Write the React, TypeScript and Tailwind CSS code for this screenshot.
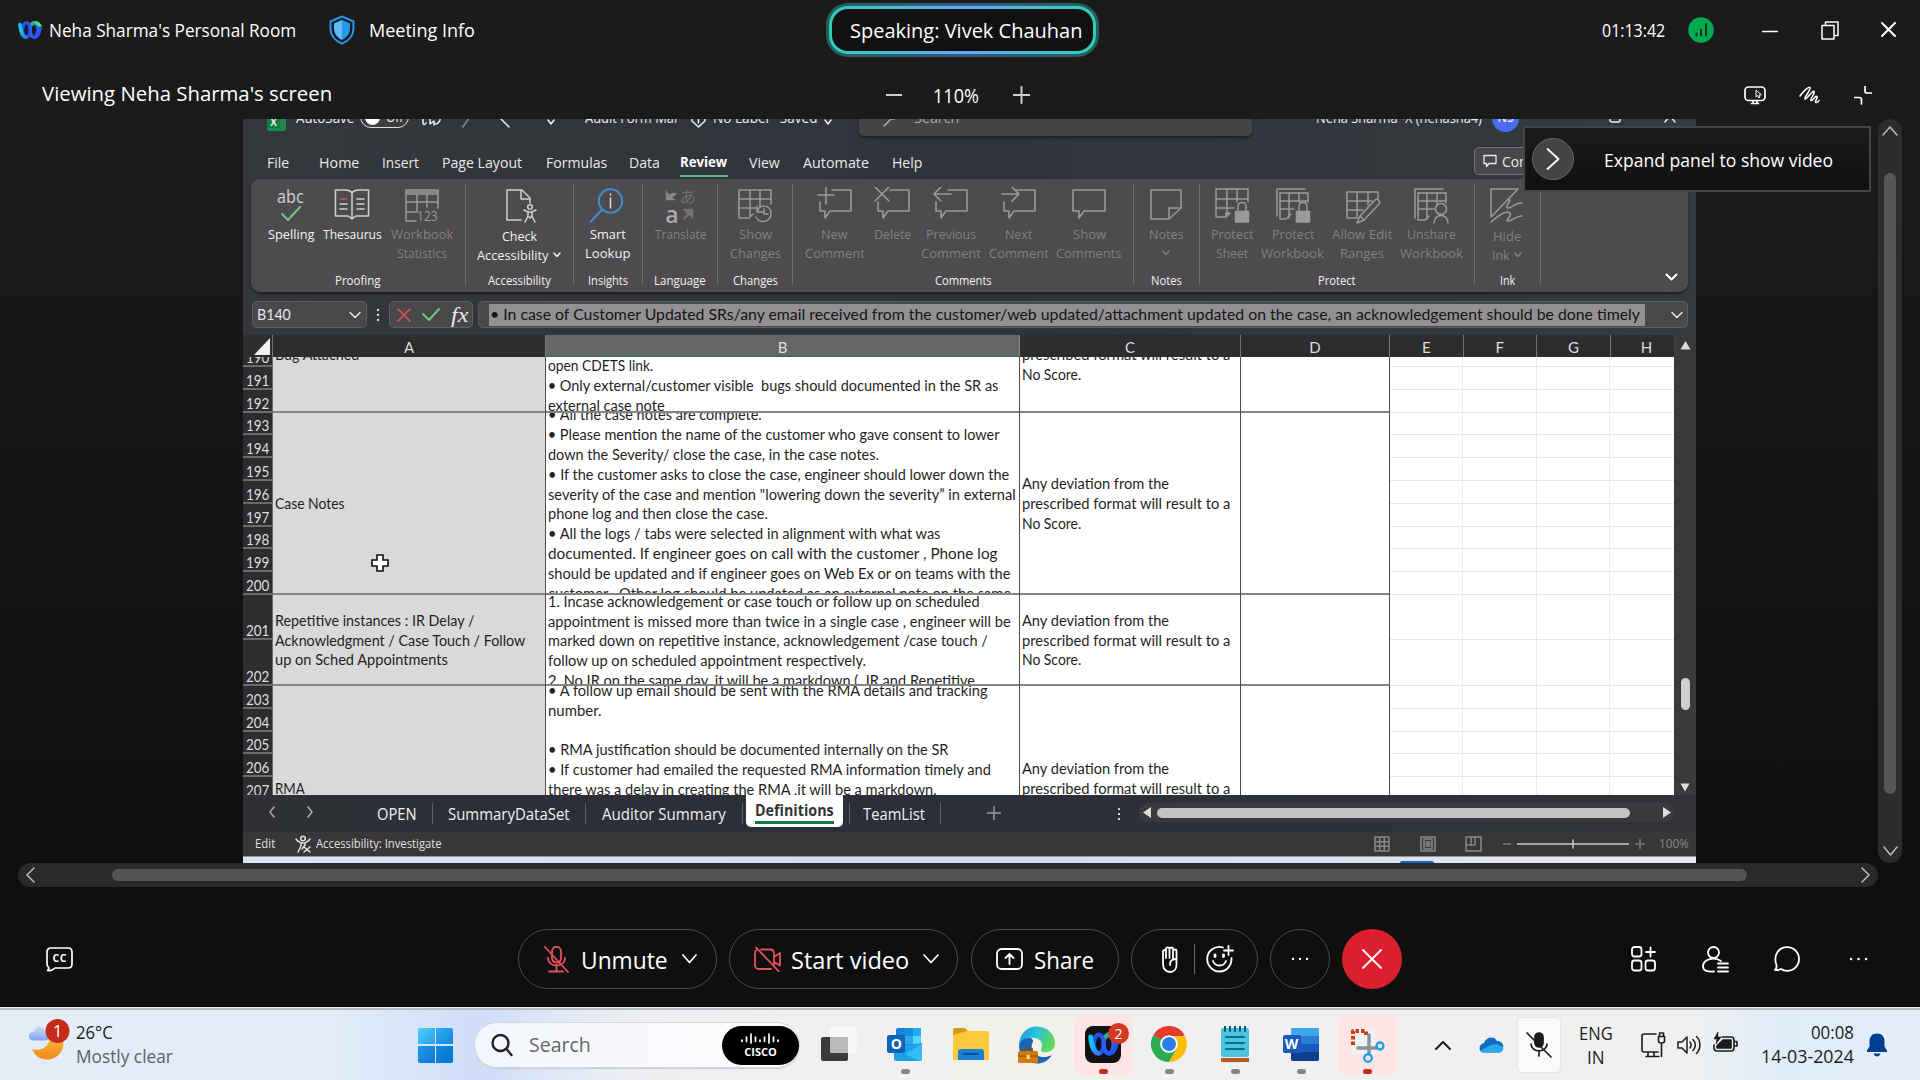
import React, { useLayoutEffect, useRef, useState } from 'react';

type TProps = { w: number; className?: string; children: React.ReactNode };

function T({ w, className = '', children }: TProps) {
  const ref = useRef<HTMLSpanElement>(null);
  const [k, setK] = useState(1);
  useLayoutEffect(() => {
    if (ref.current && ref.current.offsetWidth) setK(w / ref.current.offsetWidth);
  }, [w]);
  return (
    <span className={`block shrink-0 whitespace-pre leading-none ${className}`} style={{ width: w }}>
      <span ref={ref} className="inline-block origin-left" style={{ transform: `scaleX(${k})` }}>
        {children}
      </span>
    </span>
  );
}

type IcoProps = { w: number; h: number; className?: string; sw?: number; children: React.ReactNode };

function Ico({ w, h, className = '', sw = 1.5, children }: IcoProps) {
  return (
    <svg
      width={w}
      height={h}
      viewBox={`0 0 ${w} ${h}`}
      fill="none"
      stroke="currentColor"
      strokeWidth={sw}
      strokeLinecap="round"
      strokeLinejoin="round"
      className={`block shrink-0 ${className}`}
    >
      {children}
    </svg>
  );
}

function WebexMark({ w, h, className = '' }: { w: number; h: number; className?: string }) {
  return (
    <svg width={w} height={h} viewBox="0 0 24 18" fill="none" className={`block shrink-0 ${className}`}>
      <defs>
        <linearGradient id="wxa" x1="0" y1="0" x2="0" y2="1">
          <stop offset="0" stopColor="#07c5f5" />
          <stop offset="0.6" stopColor="#12c4ea" />
          <stop offset="1" stopColor="#2f7bff" />
        </linearGradient>
        <linearGradient id="wxb" x1="0" y1="0" x2="1" y2="0">
          <stop offset="0" stopColor="#1fae8c" />
          <stop offset="1" stopColor="#5ee86a" />
        </linearGradient>
      </defs>
      <ellipse cx="8.400" cy="9" rx="3.900" ry="7.200" stroke="#2451e8" strokeWidth="3.400" />
      <ellipse cx="16" cy="9" rx="3.900" ry="7.200" stroke="#2a5cff" strokeWidth="3.400" />
      <path d="M2 3.500C2.600 9.500 4.500 16 8 16.200" stroke="url(#wxa)" strokeWidth="3.600" strokeLinecap="round" />
      <path d="M14 3C16 0.800 20 1 21.800 5" stroke="url(#wxb)" strokeWidth="3.600" strokeLinecap="round" />
      <path d="M22 7C21.500 11 20 16 16.500 16.200" stroke="#2457f0" strokeWidth="3.600" strokeLinecap="round" />
    </svg>
  );
}

function TitleBar() {
  return (
    <div className="flex h-[60px] items-center pl-[18px] text-[17.5px] text-white">
      <WebexMark w={24} h={18} />
      <T w={247.5} className="ml-[6.5px] pt-[2px]">Neha Sharma's Personal Room</T>
      <Ico w={26} h={30} className="ml-[33px]" sw={2}>
        <path d="M13 1.500L24.500 6.500V13C24.500 20 20 26 13 28.700C6 26 1.500 20 1.500 13V6.500Z" stroke="#2196e8" fill="#151d24" />
        <path d="M13 5L5 8.500V13C5 18.500 8 22.500 13 25Z" fill="#5fbdf6" stroke="none" />
        <path d="M13 5L21 8.500V13C21 18.500 18 22.500 13 25Z" fill="#2698e8" stroke="none" />
      </Ico>
      <T w={106} className="ml-[14px] pt-[2px]">Meeting Info</T>
      <div className="ml-[351px] h-[54px] w-[273px] rounded-[22px] bg-linear-to-r from-[#245f58] via-[#34597f] to-[#245f58] p-[3px]">
        <div className="h-full rounded-[19px] bg-linear-to-r from-[#2fcdb4] via-[#62aaff] to-[#2fcdb4] p-[3px]">
          <div className="flex h-full items-center rounded-[16px] bg-[#111] pl-[18px] text-[20px]">
            <T w={232} className="pt-px">Speaking: Vivek Chauhan</T>
          </div>
        </div>
      </div>
      <T w={63} className="ml-[502.5px] pt-[2px]">01:13:42</T>
      <Ico w={26} h={26} className="ml-[23.5px]" sw={2}>
        <circle cx="13" cy="13" r="12.800" fill="#00ab50" stroke="none" />
        <path d="M8.500 16.500V18.500M13 12.500V18.500M18 7V18.500" stroke="#06371d" />
      </Ico>
      <Ico w={16} h={20} className="ml-[48px]">
        <path d="M0.500 11.500H15.500" />
      </Ico>
      <Ico w={18} h={19} className="ml-[43px]">
        <path d="M1 4.500H13V18H1Z M4.500 4V1H17V14.500H13.500" />
      </Ico>
      <Ico w={15} h={16} className="ml-[42px]" sw={2}>
        <path d="M1 1L14 14M14 1L1 14" />
      </Ico>
    </div>
  );
}

function ViewBar() {
  return (
    <div className="flex h-[59px] items-center pl-[42px] pt-[11px] text-[20px] text-white">
      <T w={290} className="mb-[2px]">Viewing Neha Sharma's screen</T>
      <Ico w={16} h={16} className="ml-[554px] text-[#ccc]" sw={2}>
        <path d="M0 8H16" />
      </Ico>
      <T w={46} className="ml-[31px] pt-[2px]">110%</T>
      <Ico w={17} h={18} className="ml-[34px] text-[#ccc]" sw={2}>
        <path d="M0 9H17M8.500 1V17" />
      </Ico>
      <Ico w={22} h={20} className="ml-[714px]" sw={1.7}>
        <rect x="1" y="2" width="20" height="13.500" rx="3.500" />
        <path d="M7.500 18.500H14.500M9 16V18M13 16V18" />
        <path d="M12 5.500V12L13.500 10.500L15 13L16 12L15 10L17 9.800Z" strokeWidth="1" />
      </Ico>
      <Ico w={21} h={18} className="ml-[33px]" sw={1.6}>
        <path d="M1 10C4 6 9.500 0 11 1.500C12.500 3 4.500 12 6 13C7.500 14 13.500 4 15 5.500C16.500 7 10.500 13.500 12 14.500C13.500 15.300 16.500 9 18 10.500C19 12 15 16 17 16.500C18.500 16.800 19.500 15.500 20 14.500" />
      </Ico>
      <Ico w={18} h={19} className="ml-[34px]" sw={1.7}>
        <path d="M11 0.500V5C11 6.500 11.800 7 13 7H17.500M0.500 11.500H5C6.500 11.500 7.500 12 7.500 13.500V18" />
      </Ico>
    </div>
  );
}

function ExcelTitle() {
  return (
    <div className="h-[26px] overflow-hidden">
      <div className="-mt-[21px] flex h-[40px] items-center pl-[24px] text-[14px] text-[#eee]">
        <div className="mt-[8px] flex h-[18px] w-[19px] items-end rounded-[2px] bg-[#1d8a50]">
          <div className="mb-[3px] flex h-[13px] w-[13px] items-center justify-center bg-[#107c41] text-[10px] font-bold leading-none">X</div>
        </div>
        <T w={58} className="ml-[10px]">AutoSave</T>
        <div className="ml-[6px] -mt-[3px] flex h-[22px] w-[49px] items-center rounded-full border-[1.5px] border-[#ddd] bg-[#3d3d3f] pl-[4px]">
          <div className="mt-[2px] h-[15px] w-[15px] rounded-full bg-white" />
          <T w={17} className="ml-[6px]">Off</T>
        </div>
        <Ico w={20} h={24} className="ml-[13px]">
          <path d="M1 2V17C1 19 3 19 4 17M8 6V18L12 15V19M18 9C19 14 17 18 13 18M11 12H18" />
        </Ico>
        <Ico w={10} h={22} className="ml-[20px] text-[#888]"><path d="M9 8L1 20" /></Ico>
        <Ico w={10} h={22} className="ml-[28px]"><path d="M1 12L9 20" /></Ico>
        <Ico w={10} h={20} className="ml-[36px]"><path d="M2 12L5 16L8 12" /></Ico>
        <T w={94} className="ml-[29px]">Audit Form Mar</T>
        <Ico w={15} h={26} className="ml-[12px]"><path d="M1 8V16L7.500 22L14 16V8M7.500 8V18" /></Ico>
        <T w={104} className="ml-[7px]">No Label · Saved</T>
        <Ico w={10} h={20} className="ml-[6px]"><path d="M2 12L5 16L8 12" /></Ico>
        <div className="ml-[26px] flex h-[38px] w-[393px] items-center self-start rounded-[5px] bg-[#444] pl-[24px] text-[#aaa] shadow-[0_2px_2px_#222]">
          <Ico w={14} h={24}><path d="M1 21L9 13" /><circle cx="10" cy="9" r="5" /></Ico>
          <T w={45} className="ml-[17px] pt-[2px]">Search</T>
        </div>
        <T w={166} className="ml-[64px]">Neha Sharma -X (nehasha4)</T>
        <div className="-mt-px ml-[10px] flex h-[28px] w-[27px] items-center justify-center rounded-full bg-[#4f6bed] text-[12px] font-semibold">NS</div>
        <Ico w={12} h={18} className="ml-[90px]"><rect x="1" y="4" width="10" height="9" rx="2" /></Ico>
        <Ico w={12} h={16} className="ml-[43px]"><path d="M1 12L6 6L11 12" /></Ico>
      </div>
    </div>
  );
}

function MenuTabs() {
  return (
    <div className="flex h-[34px] items-center pl-[23.5px] text-[15px] text-[#e8e8e8]">
      <T w={22.500}>File</T>
      <T w={40} className="ml-[29.5px]">Home</T>
      <T w={36.500} className="ml-[23px]">Insert</T>
      <T w={80} className="ml-[24px]">Page Layout</T>
      <T w={61} className="ml-[24px]">Formulas</T>
      <T w={31} className="ml-[21.5px]">Data</T>
      <div className="ml-[20.500px] mt-[6px] border-b-[2.500px] border-[#5fb87f] pb-[6px]">
        <T w={47.500} className="font-bold text-white">Review</T>
      </div>
      <T w={31} className="ml-[21.500px]">View</T>
      <T w={66} className="ml-[22.500px]">Automate</T>
      <T w={30} className="ml-[23px]">Help</T>
      <div className="-mt-[2px] ml-[552px] flex h-[28px] w-[110px] items-center rounded-[5px] border-[1.500px] border-[#747476] bg-[#48484a] pl-[8px]">
        <Ico w={14} h={14} sw={1.3}><path d="M1 1.500H13V9.500H6L3.500 12.500V9.500H1Z" /></Ico>
        <T w={70} className="ml-[5px] pt-px">Comments</T>
      </div>
    </div>
  );
}

type BtnProps = {
  w: number;
  lines: [string, number][];
  on?: boolean;
  chevron?: boolean;
  low?: boolean;
  children: React.ReactNode;
};

function Btn({ w, lines, on, chevron, low, children }: BtnProps) {
  return (
    <div className={`flex flex-col items-center text-[13.500px] ${on ? 'text-[#f2f2f2]' : 'text-[#828183]'}`} style={{ width: w }}>
      <div className={`flex h-[38px] justify-center ${low ? 'mb-[2px]' : ''} ${on ? 'text-[#cfcfcf]' : 'text-[#9a999b]'}`}>{children}</div>
      {lines.map(([t, lw], i) => (
        <div key={i} className="flex h-[18.400px] items-center justify-center">
          <T w={lw} className="pt-[2px]">{t}</T>
          {chevron && i === lines.length - 1 && (
            <Ico w={8} h={6} className={t ? 'ml-[5px]' : ''}><path d="M1 1L4 4.500L7 1" /></Ico>
          )}
        </div>
      ))}
    </div>
  );
}

function Group({ w, label, lw, pl = 0, children }: { w: number; label: string; lw: number; pl?: number; children: React.ReactNode }) {
  return (
    <div className="mt-[5px] flex h-[101px] shrink-0 flex-col items-center justify-between border-r-[1.500px] border-[#6d6c6e] pt-[3px]" style={{ width: w }}>
      <div className="flex w-full" style={{ paddingLeft: pl }}>{children}</div>
      <T w={lw} className="-mb-[2px] text-[12.500px] text-[#f2f2f2]">{label}</T>
    </div>
  );
}

const sheetGrid = 'M4 2H36V15M4 2V30H14L18 26M4 12H36M4 21H22M15 2V29M25 2V15M14 30V26H18';

function Bubble({ children, open = true }: { children?: React.ReactNode; open?: boolean }) {
  return (
    <Ico w={40} h={38} sw={1.600}>
      {open ? <path d="M17 3H36V24H15L10 31V24H5V15" /> : <path d="M4 3H36V24H15L10 31V24H4Z" />}
      {children}
    </Ico>
  );
}

function Lock() {
  return (
    <>
      <path d="M26 24V20C26 14 34 14 34 20V24" />
      <rect x="23.500" y="24.500" width="13" height="10.500" fill="#9a999b" stroke="#9a999b" />
    </>
  );
}

function Ribbon() {
  return (
    <div className="ml-[8px] flex h-[113px] w-[1437px] rounded-[9px] bg-[#4d4b4d] shadow-[0_2px_3px_#1d1d20]">
      <Group w={214.500} label="Proofing" lw={45} pl={11}>
        <Btn w={57.600} on lines={[['Spelling', 46.500]]}>
          <div className="flex flex-col items-center">
            <T w={27} className="text-[18px]">abc</T>
            <Ico w={22} h={16} sw={2} className="mt-px text-[#6cc788]"><path d="M2 8L8 14L20 1" /></Ico>
          </div>
        </Btn>
        <Btn w={65.800} on lines={[['Thesaurus', 59]]}>
          <Ico w={40} h={38}>
            <path d="M20 6C18 3 15 3 13 3H3.500V29H16L20 32L24 29H36.500V3H27C24 3 22 3 20 6V31M8 17H15M8 22H15M25 12H32M25 17H32M25 22H32" />
            <path d="M8 12H15" stroke="#d9534f" />
          </Ico>
        </Btn>
        <Btn w={72.800} lines={[['Workbook', 62.500], ['Statistics', 50.500]]}>
          <div className="grid">
            <Ico w={40} h={38} className="col-start-1 row-start-1">
              <path d="M4 3H36V21M4 3V34H14M4 7H36M4 15H36M4 25H14M15 7V25M25 7V20M4 5H36" />
            </Ico>
            <T w={21} className="col-start-1 row-start-1 ml-[15px] mt-[21px] text-[15px]">123</T>
          </div>
        </Btn>
      </Group>
      <Group w={108} label="Accessibility" lw={63}>
        <Btn w={107} on low chevron lines={[['Check', 35], ['Accessibility', 71]]}>
          <Ico w={40} h={38}>
            <path d="M22 33H8V3H23L31 11V16M22 3V12H31" />
            <circle cx="31" cy="20" r="2.300" />
            <path d="M25 23L29 25V29L26 35M37 23L33 25V29L36 35M29 25H33M29 29L31 31L33 29" />
          </Ico>
        </Btn>
      </Group>
      <Group w={69.500} label="Insights" lw={40}>
        <Btn w={68} on lines={[['Smart', 36], ['Lookup', 45.500]]}>
          <Ico w={40} h={38} sw={2} className="text-[#3f8fce]">
            <circle cx="22.500" cy="14" r="11.700" />
            <path d="M14 22.500L2.500 35" />
            <path d="M22.500 11V21M22.500 7V8" stroke="#ddd" strokeWidth="1.500" />
          </Ico>
        </Btn>
      </Group>
      <Group w={75} label="Language" lw={51.500}>
        <Btn w={74} lines={[['Translate', 51]]}>
          <div className="grid h-[36px] grid-cols-2 grid-rows-2 items-center justify-items-center text-[#88878a]">
            <Ico w={14} h={14}><path d="M1 2V11H10L7 8.500L12 4.500C9 3.500 6.500 4 4 5.500Z" fill="currentColor" strokeWidth="0.500" /></Ico>
            <span className="font-['Noto_Sans_CJK_JP',sans-serif] text-[16px] leading-none text-[#6f6e70]">あ</span>
            <span className="text-[23px] font-semibold leading-[14px] text-[#aaa]">a</span>
            <Ico w={14} h={14} className="text-[#737274]"><path d="M2 2H12V12L8 8L4 12H2L6 7Z" fill="currentColor" strokeWidth="0.500" /></Ico>
          </div>
        </Btn>
      </Group>
      <Group w={75} label="Changes" lw={45}>
        <Btn w={74} lines={[['Show', 33], ['Changes', 51]]}>
          <Ico w={42} h={38}>
            <path d="M5 3H37V17M5 3V31H15L19 27M5 12H37M5 21H22M16 3V30M26 3V19" />
            <path d="M23 19V25H29M23 25C25 17 36 17 37 26C37 36 25 37 22 30M30 22V27H34" />
          </Ico>
        </Btn>
      </Group>
      <Group w={341} label="Comments" lw={57} pl={10}>
        <Btn w={63} lines={[['New', 26.500], ['Comment', 59.500]]}>
          <Bubble><path d="M3 8H19M11 0V17" /></Bubble>
        </Btn>
        <Btn w={54} lines={[['Delete', 37.500]]}>
          <Bubble><path d="M2 0L16 14M16 0L2 14" /></Bubble>
        </Btn>
        <Btn w={62} lines={[['Previous', 50], ['Comment', 59.500]]}>
          <Bubble><path d="M20 7H3M10 0L3 7L10 14" /></Bubble>
        </Btn>
        <Btn w={73} lines={[['Next', 27.500], ['Comment', 59.500]]}>
          <Bubble><path d="M3 7H20M13 0L20 7L13 14" /></Bubble>
        </Btn>
        <Btn w={68} lines={[['Show', 33], ['Comments', 65.500]]}>
          <Bubble open={false} />
        </Btn>
      </Group>
      <Group w={65.500} label="Notes" lw={30.500}>
        <Btn w={64} chevron lines={[['Notes', 34.500], ['', 0]]}>
          <Ico w={40} h={38}><path d="M5 3H35V21L23 32H5ZM23 32V21H35" /></Ico>
        </Btn>
      </Group>
      <Group w={275.500} label="Protect" lw={37.500} pl={4.500}>
        <Btn w={56} lines={[['Protect', 42], ['Sheet', 32.500]]}>
          <Ico w={40} h={38}><path d={sheetGrid} /><Lock /></Ico>
        </Btn>
        <Btn w={65} lines={[['Protect', 42], ['Workbook', 63]]}>
          <Ico w={40} h={38}>
            <path d="M4 29V2H32M7 6H35V15M7 6V32H13L18 27M7 14H35M7 22H21M16 6V31M26 6V15" /><Lock />
          </Ico>
        </Btn>
        <Btn w={74} lines={[['Allow Edit', 60], ['Ranges', 43.500]]}>
          <Ico w={40} h={38}>
            <path d="M5 5H36V12M5 5V31H15M5 14H30M5 23H21M15 5V30M26 5V18" />
            <path d="M15 36L18 29L33 13C35 11 39 14 37 17L22 33ZM18 29L22 33" />
          </Ico>
        </Btn>
        <Btn w={64} lines={[['Unshare', 48.500], ['Workbook', 63]]}>
          <Ico w={40} h={38}>
            <path d="M4 31V2H32M7 6H35V16M7 6V33H14L18 29M7 14H35M7 22H23M16 6V32M26 6V17" />
            <circle cx="30" cy="22" r="5.500" />
            <path d="M23 36C23 26 37 26 37 36" />
          </Ico>
        </Btn>
      </Group>
      <Group w={65.500} label="Ink" lw={15.500}>
        <Btn w={64} low chevron lines={[['Hide', 28], ['Ink', 17.500]]}>
          <Ico w={40} h={38}>
            <path d="M4 30V2H31ZM21 13C27 11 16 21 21 21C26 21 28 15 35 16M4 35C12 28 20 23 23 26C26 29 17 33 21 34C26 34 30 28 35 29" />
          </Ico>
        </Btn>
      </Group>
      <Ico w={13} h={9} className="ml-[124px] mt-[94px] text-white" sw={2}><path d="M1.500 1.500L6.500 6.500L11.500 1.500" /></Ico>
    </div>
  );
}

function FormulaBar() {
  const box = 'flex h-[27px] shrink-0 items-center rounded-[5px] border-[1.500px] border-[#5e5d60] bg-[#48474a]';
  return (
    <div className="flex h-[43px] items-center pl-[8.500px] pt-[2px] font-[Lato,sans-serif] text-[15px] text-[#e8e8e8]">
      <div className={`${box} w-[115.500px] pl-[4px]`}>
        <T w={34}>B140</T>
        <Ico w={12} h={8} className="ml-[58px]"><path d="M1 1.500L6 6.500L11 1.500" /></Ico>
      </div>
      <Ico w={4} h={14} className="ml-[9px]" sw={2.300}><path d="M2 2V2.100M2 7V7.100M2 12V12.100" /></Ico>
      <div className={`${box} ml-[9px] w-[83.500px] pl-[7px]`}>
        <Ico w={14} h={14} className="text-[#e0525a]" sw={1.700}><path d="M1 1L13 13M13 1L1 13" /></Ico>
        <Ico w={18} h={13} className="ml-[11px] text-[#6cc788]" sw={2}><path d="M1 6L7 12L17 1" /></Ico>
        <T w={17} className="ml-[10.500px] font-['Liberation_Serif',serif] text-[20px] italic">fx</T>
      </div>
      <div className={`${box} ml-[5px] w-[1210px] pl-[10px]`}>
        <div className="flex h-[22px] w-[1156px] items-center bg-[#929092] pl-[1px] text-[15.500px] text-[#151515]">
          <T w={1150}>• In case of Customer Updated SRs/any email received from the customer/web updated/attachment updated on the case, an acknowledgement should be done timely</T>
        </div>
        <Ico w={12} h={8} className="ml-[26px]"><path d="M1 1.500L6 6.500L11 1.500" /></Ico>
      </div>
    </div>
  );
}

const columns: [string, number][] = [['A', 273], ['B', 474], ['C', 221], ['D', 149], ['E', 73.500], ['F', 73.500], ['G', 74], ['H', 72]];

type Line = [string, number];
type Block = { h: number; top: number; lines: Line[] };

const dev: Line[] = [['Any deviation from the', 147], ['prescribed format will result to a', 208], ['No Score.', 59.500]];

const colA: Block[] = [
  { h: 56, top: -11.500, lines: [['Bug Attached', 84]] },
  { h: 182, top: 81.200, lines: [['Case Notes', 70]] },
  { h: 91, top: 16.200, lines: [['Repetitive instances : IR Delay /', 199.500], ['Acknowledgment / Case Touch / Follow', 250], ['up on Sched Appointments', 173]] },
  { h: 109, top: 93.300, lines: [['RMA', 29.500]] },
];

const colB: Block[] = [
  { h: 56, top: -0.200, lines: [['open CDETS link.', 105.500], ['• Only external/customer visible  bugs should documented in the SR as', 451], ['external case note', 116.500]] },
  {
    h: 182,
    top: -7.200,
    lines: [
      ['• All the case notes are complete.', 213.500],
      ['• Please mention the name of the customer who gave consent to lower', 452],
      ['down the Severity/ close the case, in the case notes.', 331],
      ['• If the customer asks to close the case, engineer should lower down the', 461],
      ['severity of the case and mention "lowering down the severity” in external', 467.500],
      ['phone log and then close the case.', 220],
      ['• All the logs / tabs were selected in alignment with what was', 392.500],
      ['documented. If engineer goes on call with the customer , Phone log', 449.500],
      ['should be updated and if engineer goes on Web Ex or on teams with the', 462.500],
      ['customer . Other log should be updated as an external note on the same', 463.500],
    ],
  },
  {
    h: 91,
    top: -2.800,
    lines: [
      ['1. Incase acknowledgement or case touch or follow up on scheduled', 431.500],
      ['appointment is missed more than twice in a single case , engineer will be', 463],
      ['marked down on repetitive instance, acknowledgement /case touch /', 439.500],
      ['follow up on scheduled appointment respectively.', 318],
      ['2. No IR on the same day, it will be a markdown (  IR and Repetitive', 427.500],
    ],
  },
  {
    h: 109,
    top: -4.900,
    lines: [
      ['• A follow up email should be sent with the RMA details and tracking', 439.500],
      ['number.', 53.500],
      ['', 0],
      ['• RMA justification should be documented internally on the SR', 400.500],
      ['• If customer had emailed the requested RMA information timely and', 442.500],
      ['there was a delay in creating the RMA ,it will be a markdown.', 389],
    ],
  },
];

const colC: Block[] = [
  { h: 56, top: -11.200, lines: [dev[1], dev[2]] },
  { h: 182, top: 61.400, lines: dev },
  { h: 91, top: 16.200, lines: dev },
  { h: 109, top: 73.500, lines: dev },
];

const colD: Block[] = [56, 182, 91, 109].map((h) => ({ h, top: 0, lines: [] }));

function Column({ w, blocks, grey }: { w: number; blocks: Block[]; grey?: boolean }) {
  return (
    <div className={`shrink-0 border-r border-[#4d4d4d] ${grey ? 'bg-[#d9d9da]' : 'bg-white'}`} style={{ width: w }}>
      {blocks.map((b, i) => (
        <div
          key={i}
          className={`flex flex-col overflow-hidden pl-[1.700px] ${i < 3 ? 'border-b-2 border-[#858585]' : ''}`}
          style={{ height: b.h }}
        >
          {b.lines.map(([t, lw], j) => (
            <div key={j} className="flex h-[19.800px] shrink-0 items-center" style={{ marginTop: j === 0 ? b.top : 0 }}>
              {t && <T w={lw}>{t}</T>}
            </div>
          ))}
        </div>
      ))}
    </div>
  );
}

const rowHeights = [10, 22.800, 22.800, 22.800, 22.800, 22.800, 22.800, 22.800, 22.800, 22.800, 22.800, 45.500, 45.500, 22.800, 22.800, 22.800, 22.800, 22.800];

function Grid() {
  return (
    <div className="flex font-[Lato,sans-serif]">
      <div className="w-[1431px] shrink-0">
        <div className="flex h-[22px] overflow-hidden bg-[#2d2c2e] text-[15px] text-[#ddd]">
          <div className="flex w-[30px] shrink-0 items-end justify-end border-r border-[#777] pb-[2px] pr-[2px]">
            <Ico w={16} h={17} className="text-[#f2f2f2]" sw={0}><path d="M16 0V17H0Z" fill="currentColor" /></Ico>
          </div>
          {columns.map(([c, w]) => (
            <div
              key={c}
              className={`flex shrink-0 items-center justify-center border-r pt-[3px] ${c === 'B' ? 'border-b-[1.500px] border-r-[#888] border-b-[#217346] bg-[#666]' : c === 'H' ? 'border-transparent' : 'border-[#777]'}`}
              style={{ width: w }}
            >
              {c}
            </div>
          ))}
        </div>
        <div className="flex h-[438px] overflow-hidden bg-white text-[14.500px] text-[#1f1f1f]">
          <div className="w-[30px] shrink-0 bg-[#2d2c2e] text-[16px] text-[#ddd]">
            {rowHeights.map((h, i) => (
              <div key={i} className="flex items-end justify-end overflow-hidden border-b-2 border-r border-[#6b6b6b] pr-[3px]" style={{ height: h }}>
                <T w={23.500}>{190 + i}</T>
              </div>
            ))}
          </div>
          <Column w={273} blocks={colA} grey />
          <Column w={474} blocks={colB} />
          <Column w={221} blocks={colC} />
          <Column w={149} blocks={colD} />
          {[73.500, 73.500, 74, 64].map((w, c) => (
            <div key={c} className={c < 3 ? 'border-r border-[#ececec]' : ''} style={{ width: w }}>
              {rowHeights.map((h, i) => (
                <div key={i} className="border-b border-[#e6e6e6]" style={{ height: h }} />
              ))}
            </div>
          ))}
        </div>
      </div>
      <div className="flex w-[22px] flex-col items-center bg-[#3a393b] text-[#ddd]">
        <Ico w={11} h={9} className="mt-[6px]" sw={0}><path d="M5.500 0L10.500 8.500H0.500Z" fill="currentColor" /></Ico>
        <div className="mt-[328px] h-[32px] w-[9px] rounded-full bg-[#cfcfcf]" />
        <Ico w={10} h={9} className="mt-[73px]" sw={0}><path d="M5 8.500L0.500 0.500H9.500Z" fill="currentColor" /></Ico>
      </div>
    </div>
  );
}

function SheetTabs() {
  const sep = 'h-[21px] w-px bg-[#5c5f66]';
  return (
    <div className="flex h-[37px] items-center bg-linear-to-r from-[#2e3036] via-[#2b2f39] to-[#313338] pl-[26px] text-[15.500px] text-[#f0f0f0]">
      <Ico w={6} h={12} className="-mt-[3px] text-[#aaa]"><path d="M5 1L1 6L5 11" /></Ico>
      <Ico w={6} h={12} className="-mt-[3px] ml-[32px] text-[#aaa]"><path d="M1 1L5 6L1 11" /></Ico>
      <T w={40} className="ml-[64px] pt-[2px]">OPEN</T>
      <div className={`${sep} ml-[15px]`} />
      <T w={121.500} className="ml-[15px] pt-[2px]">SummaryDataSet</T>
      <div className={`${sep} ml-[15.500px]`} />
      <T w={123.500} className="ml-[16px] pt-[2px]">Auditor Summary</T>
      <div className={`${sep} ml-[16px]`} />
      <div className="ml-[3.500px] flex h-[32px] w-[97px] flex-col items-center self-start rounded-b-[5px] bg-white pt-[8px]">
        <T w={78.500} className="font-bold text-[#333]">Definitions</T>
        <div className="mt-[2.500px] h-[2.500px] w-[79px] bg-[#107c41]" />
      </div>
      <div className={`${sep} ml-[6px]`} />
      <T w={62} className="ml-[13px] pt-[2px]">TeamList</T>
      <div className={`${sep} ml-[15px]`} />
      <Ico w={14} h={14} className="-mt-[2px] ml-[46px] text-[#999]"><path d="M0 7H14M7 0V14" /></Ico>
      <Ico w={4} h={14} className="ml-[115.500px]" sw={2.200}><path d="M2 2V2.100M2 7V7.100M2 12V12.100" /></Ico>
      <div className="-mt-[2px] ml-[18px] flex h-[19px] w-[536px] items-center rounded-full bg-[#3a393b] text-[#ddd]">
        <Ico w={8} h={11} className="ml-[4px]" sw={0}><path d="M8 0V11L0 5.500Z" fill="currentColor" /></Ico>
        <div className="ml-[6px] h-[10px] w-[473px] rounded-full bg-[#c4c3c4]" />
        <Ico w={8} h={11} className="ml-[33px]" sw={0}><path d="M0 0V11L8 5.500Z" fill="currentColor" /></Ico>
      </div>
    </div>
  );
}

function StatusBar() {
  return (
    <div className="flex h-[24px] items-center bg-[#383638] pl-[12px] text-[12.500px] text-[#e0e0e0]">
      <T w={20} className="pt-px">Edit</T>
      <Ico w={16} h={18} className="ml-[20px]">
        <circle cx="8" cy="3.500" r="2.300" />
        <path d="M1 4C3 7 5 7 6 8V11L3 17M15 4C13 7 11 7 10 8V10L7 14M9 12L15 17M15 12L9 17M6 8H10" />
      </Ico>
      <T w={126} className="ml-[4.500px] pt-px">Accessibility: Investigate</T>
      <Ico w={16} h={16} className="ml-[932.500px] text-[#8a898b]"><path d="M1 1H15V15H1ZM1 5.700H15M1 10.300H15M5.700 1V15M10.300 1V15" /></Ico>
      <Ico w={16} h={16} className="ml-[30px] text-[#8a898b]"><path d="M1 1H15V15H1ZM4 3H12V13H4ZM6 6H10M6 8H10M6 10H10" /></Ico>
      <Ico w={17} h={16} className="ml-[29px] text-[#8a898b]"><path d="M1 1H16V15H1ZM1 9H10V1M6 1V9" /></Ico>
      <Ico w={8} h={10} className="ml-[21px] text-[#77767a]"><path d="M0 5H8" /></Ico>
      <Ico w={112} h={12} className="ml-[6px] text-[#c8c8c8]"><path d="M0 6H112M56 2V10" /></Ico>
      <Ico w={10} h={10} className="ml-[6px] text-[#77767a]"><path d="M0 5H10M5 0V10" /></Ico>
      <T w={30} className="ml-[13.500px] pt-px text-[#8a898b]">100%</T>
    </div>
  );
}

function SharedScreen() {
  return (
    <div className="h-[744px] w-[1453px] shrink-0 overflow-hidden bg-linear-to-r from-[#34373b] via-[#2f343b] to-[#353a3f]">
      <ExcelTitle />
      <MenuTabs />
      <Ribbon />
      <FormulaBar />
      <Grid />
      <SheetTabs />
      <StatusBar />
      <div className="flex h-[7px] items-end border-t-[1.500px] border-[#939297] bg-linear-to-r from-[#d9e6f8] via-[#d6d8f2] to-[#e8e9f0] pl-[1157px]">
        <div className="h-[2px] w-[34px] rounded-t-[3px] bg-[#0f6cbd]" />
      </div>
    </div>
  );
}

function ExpandPanel() {
  return (
    <div className="absolute left-[1523px] top-[126px] flex h-[66px] w-[348px] items-center border-2 border-[#454545] bg-linear-to-b from-[#1b1b1b] to-[#101010] pl-[7px] text-[18px] text-white">
      <div className="flex h-[42px] w-[42px] items-center justify-center rounded-full border border-[#666] bg-[#444]">
        <Ico w={14} h={22} sw={1.800}><path d="M1.500 1L12.500 11L1.500 21" /></Ico>
      </div>
      <T w={229} className="ml-[29.500px] mt-[2px]">Expand panel to show video</T>
    </div>
  );
}

function Controls() {
  const pill = 'flex h-[60px] shrink-0 items-center rounded-full border-[1.500px] border-[#4a4a4a]';
  return (
    <div className="flex h-[120px] items-center pl-[46px] pt-[24px] text-[24px] text-white">
      <Ico w={27} h={25} sw={1.700}>
        <path d="M5 1H22C24.500 1 26 2.500 26 5V17C26 19.500 24.500 21 22 21H9C7 23 4 24 1.500 23.500C3 22 3 20.500 2 19.500C1.300 19 1 18 1 17V5C1 2.500 2.500 1 5 1Z" />
        <text x="6.500" y="14.500" fontSize="10.500" fontWeight="700" fill="currentColor" stroke="none" fontFamily="Open Sans" textLength="14">CC</text>
      </Ico>
      <div className={`${pill} ml-[445px] w-[199px] pl-[24.500px]`}>
        <Ico w={25} h={27} className="text-[#e8505b]" sw={1.800}>
          <path d="M8 6C8 -1 17 -1 17 6V12C17 18 9 18 8 12ZM4 12C4 22 21 22 21 12M12.500 19V25M5 25.500H19M1 1L24 26" />
        </Ico>
        <T w={86.500} className="ml-[12px] mt-[2px] font-medium">Unmute</T>
        <Ico w={15} h={10} className="ml-[15px]" sw={1.700}><path d="M1 1L7.500 8.500L14 1" /></Ico>
      </div>
      <div className={`${pill} ml-[12px] w-[229px] pl-[24px]`}>
        <Ico w={27} h={25} className="text-[#e8505b]" sw={1.800}>
          <path d="M7 2.500H16C19 2.500 20 4 20 6.500V18M17 22H5C2.500 22 1 20.500 1 18V6C1 4.500 1.500 3.500 2.500 3M20 10L26 6V18.500L20 15M2 0.500L25 24.500" />
        </Ico>
        <T w={118} className="ml-[10px] mt-[2px] font-medium">Start video</T>
        <Ico w={16} h={10} className="ml-[13.500px]" sw={1.700}><path d="M1 1L8 8.500L15 1" /></Ico>
      </div>
      <div className={`${pill} ml-[12.500px] w-[148px] pl-[24.500px]`}>
        <Ico w={27} h={22} sw={1.800}>
          <rect x="1" y="1" width="25" height="20" rx="4.500" />
          <path d="M13.500 16V6M9.500 10L13.500 6L17.500 10" />
        </Ico>
        <T w={60.500} className="ml-[10.500px] mt-[2px] font-medium">Share</T>
      </div>
      <div className={`${pill} ml-[12.500px] w-[127px] pl-[29px]`}>
        <Ico w={18} h={27} sw={1.800}>
          <path d="M2 14V5.500C2 3.500 5 3.500 5 5.500V12M5 10V2.800C5 0.800 8.500 0.800 8.500 2.800V12M8.500 3C8.500 1 12 1 12 3V12.500M12 5C12 3 15.500 3 15.500 5V19C15.500 23 13 26 9 26C5 26 2 23 2 18V12M15.500 13C11 13 8.500 15 9 19" />
        </Ico>
        <div className="ml-[15px] h-[30px] w-px bg-[#666]" />
        <Ico w={28} h={28} className="ml-[11px]" sw={1.800}>
          <path d="M17 2.500C9 0 1.200 6 1.200 14C1.200 21 7 26.500 13.500 26.500C21 26.500 26 20 25.500 13M22.500 1V10M18 5.500H27M7 16C9 22 18 22 20 16" />
          <path d="M9 10V11.500M17.500 10V11.500" strokeWidth="2.800" />
        </Ico>
      </div>
      <div className={`${pill} ml-[12px] w-[60px] justify-center`}>
        <Ico w={18} h={4} sw={2.300}><path d="M2 2H2.100M9 2H9.100M16 2H16.100" /></Ico>
      </div>
      <div className="ml-[12px] flex h-[60px] w-[60px] items-center justify-center rounded-full bg-[#dc1f2e]">
        <Ico w={20} h={20} sw={1.800}><path d="M1 1L19 19M19 1L1 19" /></Ico>
      </div>
      <Ico w={25} h={26} className="ml-[228.500px]" sw={1.800}>
        <rect x="1" y="1" width="9.500" height="9.500" rx="2.500" />
        <rect x="1" y="14.500" width="9.500" height="10" rx="2.500" />
        <rect x="14.500" y="14.500" width="9.500" height="10" rx="2.500" />
        <path d="M15 6H24M19.500 1.500V10.500" />
      </Ico>
      <Ico w={27} h={27} className="ml-[46px]" sw={1.800}>
        <circle cx="11.500" cy="6.500" r="5.500" />
        <path d="M12 25.500C6 26 1 25 1 20.500C1 12.500 13 10.500 19 15M16 17.500H26M16 21.500H26M16 25.500H26" />
      </Ico>
      <Ico w={26} h={26} className="ml-[45.500px]" sw={1.800}>
        <path d="M13 1.200C20 1.200 25 6.500 25 13C25 19.500 20 24.800 13 24.800C10.500 24.800 8.500 24 7 23C5 24 3 24.300 1 24C2.500 22.500 3 20.500 2.300 18.500C-1 9 5 1.200 13 1.200Z" />
      </Ico>
      <Ico w={20} h={4} className="ml-[48.500px]" sw={2.500}><path d="M2 2H2.100M9.500 2H9.600M17 2H17.100" /></Ico>
    </div>
  );
}

function TaskIcon({ dot, tile, children }: { dot?: string; tile?: boolean; children: React.ReactNode }) {
  return (
    <div className={`flex h-[59px] w-[59px] shrink-0 flex-col items-center rounded-[6px] pt-[10px] ${tile ? 'bg-[#fde5e6]' : ''}`}>
      <div className="h-[43.500px]">{children}</div>
      {dot && <div className={`h-[5px] w-[9px] rounded-full ${dot}`} />}
    </div>
  );
}

function Taskbar() {
  return (
    <div className="h-[73px] border-t border-[#e8eaee]">
      <div className="flex h-[72px] items-center border-t-2 border-[#b6bbc1] bg-[linear-gradient(90deg,#e3edf6_0px,#e2edf8_330px,#cfddf9_480px,#e0e8f6_560px,#efeff1_650px,#f0f0f0_900px,#f2f0ea_1040px,#f0f0f0_1150px,#f0f0f0_1690px,#e0ecf8_1780px,#e2edf7_1920px)] pl-[28px] text-[18px] text-[#1b1b1b]">
        <div className="flex w-[48px] items-center">
          <Ico w={46} h={54} sw={0} className="-mt-[16px]">
            <defs>
              <linearGradient id="moon" x1="0" y1="0" x2="0" y2="1"><stop offset="0" stopColor="#f7b733" /><stop offset="1" stopColor="#f28a1c" /></linearGradient>
              <linearGradient id="cloud" x1="0" y1="0" x2="0" y2="1"><stop offset="0" stopColor="#cfdcf6" /><stop offset="1" stopColor="#7fa4ee" /></linearGradient>
            </defs>
            <path d="M4 39C14 42 22 36 22 26H34C39 39 30 49.500 19 49.500C12 49.500 7 46 4 39Z" fill="url(#moon)" />
            <path d="M6 30.500C-1 30.500 -1 22 6 22C7 15 16 15 17 21C22 20 23 30.500 18 30.500Z" fill="url(#cloud)" />
            <circle cx="29.500" cy="21" r="12" fill="#c42b1c" />
            <text x="25" y="27" fontSize="16.500" fill="#fff" fontFamily="Open Sans">1</text>
          </Ico>
        </div>
        <div className="-mt-[2px] flex w-[100px] flex-col gap-[6px]">
          <T w={37}>26°C</T>
          <T w={97} className="text-[#5c6268]">Mostly clear</T>
        </div>
        <div className="ml-[242px] grid h-[35px] w-[35px] grid-cols-2 gap-[1.500px]">
          <div className="rounded-tl-[2px] bg-linear-to-br from-[#4fd0ff] to-[#23a0ec]" />
          <div className="rounded-tr-[2px] bg-linear-to-br from-[#2fb0f2] to-[#1184dc]" />
          <div className="rounded-bl-[2px] bg-linear-to-br from-[#229cea] to-[#0a76d2]" />
          <div className="rounded-br-[2px] bg-linear-to-br from-[#118ae0] to-[#0574d0]" />
        </div>
        <div className="ml-[21px] flex h-[46px] w-[326px] items-center rounded-full border border-[#d4d8de] bg-linear-to-r from-[#f3f6fd] to-[#fcfcfc] pl-[16px] text-[20px] text-[#666] shadow-[0_1px_1px_#c8ccd2]">
          <Ico w={22} h={24} className="text-[#222]" sw={2.400}><circle cx="9.500" cy="10" r="8" /><path d="M15.500 16L20.500 22" /></Ico>
          <T w={61.500} className="ml-[16px]">Search</T>
          <div className="ml-[131px] flex h-[39px] w-[78px] flex-col items-center justify-center gap-[2px] rounded-full bg-black text-[11px] font-bold text-white">
            <Ico w={40} h={11} sw={1.700}>
              <path d="M2 7V8.500M6.500 4V8.500M11 1V10M15.500 4V8.500M20 7V8.500M24.500 4V8.500M29 1V10M33.500 4V8.500M38 7V8.500" />
            </Ico>
            <T w={32}>CISCO</T>
          </div>
        </div>
        <Ico w={36} h={36} className="-mt-[2px] ml-[21px]" sw={0}>
          <rect x="0" y="11" width="27" height="24" rx="2" fill="#3a3a3a" />
          <rect x="9" y="1" width="27" height="26" rx="2" fill="#f8f8f8" />
          <path d="M9 11H27V27H11C9.500 27 9 26 9 25Z" fill="#b9b9b9" />
        </Ico>
        <div className="ml-[18.500px] flex gap-[7px]">
          <TaskIcon dot="bg-[#858585]">
            <Ico w={36} h={36} sw={0}>
              <rect x="9" y="2" width="25" height="20" rx="2" fill="#1a7fd4" />
              <rect x="17" y="2" width="9" height="8" fill="#1490df" /><rect x="26" y="2" width="8" height="8" fill="#28a8ea" />
              <rect x="26" y="10" width="8" height="9" fill="#50d9ff" /><rect x="17" y="10" width="9" height="8" fill="#28a8ea" />
              <path d="M7 20L35 17V33C35 34.500 34 35 33 35H10C8 35 7 34 7 33Z" fill="#1ea0e6" />
              <path d="M35 18L18 28L32 35C34 35 35 34 35 33Z" fill="#36bdf2" />
              <rect x="0" y="9" width="18" height="18" rx="2" fill="#0f64b8" />
              <text x="3.700" y="23" fontSize="14" fontWeight="700" fill="#fff" fontFamily="Open Sans">O</text>
            </Ico>
          </TaskIcon>
          <TaskIcon>
            <Ico w={36} h={36} sw={0}>
              <path d="M0 4C0 2.500 1 2 2 2H12L15 5V10H0Z" fill="#d99a14" />
              <path d="M0 9L14 5H34C35.500 5 36 6 36 7V32C36 33.500 35 34 34 34H2C1 34 0 33.500 0 32Z" fill="#fcc93c" />
              <path d="M5 34V26C5 24 6 23 8 23H28C30 23 31 24 31 26V34Z" fill="#1c7fd6" />
              <path d="M11 28H25" stroke="#0d4f96" strokeWidth="2" />
            </Ico>
          </TaskIcon>
          <TaskIcon>
            <Ico w={38} h={38} sw={0}>
              <defs><linearGradient id="edge" x1="0" y1="0" x2="1" y2="0.400"><stop offset="0" stopColor="#1f8fe0" /><stop offset="0.500" stopColor="#2bc3de" /><stop offset="1" stopColor="#62d95a" /></linearGradient></defs>
              <path d="M1 20C1 8 9 0.500 19 0.500C30 0.500 37 9 37 17C37 24 31 27 25 26C21 25 24 23 24 19C24 14 18 11 12 12C6 13 2 17 1 20Z" fill="url(#edge)" />
              <path d="M1 20C2 15 7 11.500 12 12C15 12.500 16 15 14 18C12 24 17 30 24 31C28 31.500 32 30 34 29C30 35 25 37.500 19 37.500C8 37.500 1 29 1 20Z" fill="#1566b8" />
              <rect x="0" y="25" width="20" height="12" rx="1.500" fill="#d07a10" />
              <path d="M6 25V22.500H14V25" stroke="#8a4d05" strokeWidth="1.600" />
              <path d="M0 30H20" stroke="#8a4d05" strokeWidth="1.200" /><rect x="8.500" y="29" width="3.500" height="4" fill="#ffd45a" />
            </Ico>
          </TaskIcon>
          <TaskIcon tile dot="bg-[#c42b1c]">
            <div className="relative flex h-[37px] w-[36px] items-center justify-center rounded-[8px] bg-[#131313]">
              <WebexMark w={31} h={24} />
              <div className="absolute -right-[8px] -top-[3px] flex h-[21px] w-[21px] items-center justify-center rounded-full bg-[#d13a20] text-[14px] text-white">2</div>
            </div>
          </TaskIcon>
          <TaskIcon dot="bg-[#858585]">
            <Ico w={36} h={36} sw={0}>
              <path d="M18 18L2.400 9A18 18 0 0 1 33.600 9Z" fill="#e33b2e" />
              <path d="M18 18L2.400 9A18 18 0 0 0 18 36L25.800 22.500Z" fill="#2da94f" />
              <path d="M18 10H34A18 18 0 0 1 18 36L25.800 22.500Z" fill="#fdbd00" />
              <circle cx="18" cy="18" r="8.800" fill="#fff" /><circle cx="18" cy="18" r="7" fill="#2a7de9" />
            </Ico>
          </TaskIcon>
          <TaskIcon dot="bg-[#858585]">
            <Ico w={30} h={36} sw={0}>
              <rect x="1" y="30" width="28" height="6" fill="#b95a1a" /><rect x="1" y="29" width="28" height="3" fill="#eee" />
              <rect x="1" y="2" width="28" height="29" rx="2" fill="#4cc3e0" />
              <path d="M5 0V5M10 0V5M15 0V5M20 0V5M25 0V5" stroke="#0a5a78" strokeWidth="2" />
              <path d="M6 11H24M6 17H24M6 23H24" stroke="#0b6e91" strokeWidth="2" />
            </Ico>
          </TaskIcon>
          <TaskIcon dot="bg-[#858585]">
            <Ico w={36} h={36} sw={0}>
              <rect x="8" y="2" width="28" height="33" rx="2" fill="#2b7cd3" />
              <path d="M8 4C8 2.500 9 2 10 2H34C35.500 2 36 3 36 4V10H8Z" fill="#41a5ee" />
              <rect x="8" y="18" width="28" height="9" fill="#185abd" />
              <path d="M8 26H36V33C36 34.500 35 35 34 35H10C8.500 35 8 34 8 33Z" fill="#103f91" />
              <rect x="0" y="9" width="18" height="18" rx="2" fill="#185abd" />
              <text x="1.800" y="23" fontSize="14" fontWeight="700" fill="#fff" fontFamily="Open Sans">W</text>
            </Ico>
          </TaskIcon>
          <TaskIcon tile dot="bg-[#c42b1c]">
            <Ico w={36} h={38} sw={2}>
              <rect x="2" y="2" width="24" height="26" fill="#eef2f5" stroke="none" />
              <path d="M4 19V5H17V10" stroke="#d83b01" strokeWidth="4" strokeDasharray="3.500 2" strokeLinecap="butt" />
              <path d="M20 9V28M9 22H28" stroke="#8b9299" strokeWidth="3.500" />
              <circle cx="31" cy="20" r="3.500" stroke="#1ba0e8" strokeWidth="2.300" />
              <circle cx="19" cy="32" r="3.800" stroke="#1ba0e8" strokeWidth="2.300" />
            </Ico>
          </TaskIcon>
        </div>
        <Ico w={16} h={9} className="ml-[38px]" sw={2}><path d="M1 8L8 1L15 8" /></Ico>
        <Ico w={25} h={16} className="ml-[28px]" sw={0}>
          <path d="M5 15.500C-1 15.500 -1 7 5 6C7 0 15 -1.500 18 4C23 4 25 8 24 11C23.500 14 22 15.500 19 15.500Z" fill="#0f6cc4" />
          <path d="M4 15.500C2 15.500 1 14 2 13L12 8C14 7 19 7 21 8.500C26 10 24.500 15.500 20 15.500Z" fill="#28a8ea" />
        </Ico>
        <div className="ml-[13px] flex h-[56px] w-[44px] items-center justify-center rounded-[5px] border border-[#e5e5e5] bg-[#fafafa]">
          <Ico w={26} h={26} sw={1.700}>
            <rect x="9" y="1" width="8" height="14" rx="4" fill="currentColor" />
            <path d="M5 12C5 21 21 21 21 12M13 19V24M1 1L25 25" />
          </Ico>
        </div>
        <div className="-mt-px ml-[18px] flex w-[34px] flex-col items-center gap-[6px]">
          <T w={34}>ENG</T>
          <T w={18}>IN</T>
        </div>
        <Ico w={25} h={26} className="ml-[28px]" sw={1.600}>
          <path d="M15 2H3C1.500 2 1 3 1 4V18C1 19 1.500 20 3 20H17M7 20V24M13 20V24M5 24.500H18" />
          <path d="M17.500 4.500H23.500V9C23.500 10.500 22 11 20.500 11C19 11 17.500 10.500 17.500 9ZM18.500 4V1H22.500V4M20.500 11V24.500" />
        </Ico>
        <Ico w={25} h={20} className="ml-[11px]" sw={1.500}>
          <path d="M1 7V13H5L10 18V2L5 7ZM13 7C14.500 9 14.500 11 13 13M16 4.500C19 8 19 12 16 15.500M19.500 1.500C24 6 24 14 19.500 18.500" />
        </Ico>
        <Ico w={25} h={22} className="-mt-[4px] ml-[11px]" sw={1.600}>
          <path d="M9 5H18C20 5 21 6 21 8V15.500C21 17.500 20 19 18 19H4C2 19 1 17.500 1 15.500V13M21 9.500H24V14H21" />
          <path d="M10 8H18V16H4V14Z" fill="currentColor" />
          <path d="M5 0L1 7H4L3 12L8 5H5Z" fill="currentColor" strokeWidth="0.600" />
        </Ico>
        <div className="-mt-[2px] ml-[23.500px] flex w-[93px] flex-col items-end gap-[6px]">
          <T w={43}>00:08</T>
          <T w={93}>14-03-2024</T>
        </div>
        <Ico w={20} h={24} className="ml-[13px]" sw={0}>
          <path d="M10 0.500C15 0.500 17.500 4 17.500 8.500V13.500L20 17.500V19H0V17.500L2.500 13.500V8.500C2.500 4 5 0.500 10 0.500ZM6.500 20.500H13.500C13 22.500 11.500 23.500 10 23.500C8.500 23.500 7 22.500 6.500 20.500Z" fill="#003e92" />
        </Ico>
      </div>
    </div>
  );
}

export default function App() {
  return (
    <div className="relative h-[1080px] w-[1920px] overflow-hidden bg-[#0f0f0f] bg-[linear-gradient(180deg,#1b1b1b_0px,#1a1a1a_190px,#0f0f0f_880px)] font-['Open_Sans','Noto_Sans',sans-serif]">
      <TitleBar />
      <ViewBar />
      <div className="flex pl-[243px]">
        <SharedScreen />
        <div className="ml-[182px] flex h-[744px] w-[24px] flex-col items-center rounded-full bg-[#2c2c2c] text-[#bbb]">
          <Ico w={16} h={10} className="mt-[7px]"><path d="M1 9L8 1L15 9" /></Ico>
          <div className="mt-[37px] h-[621px] w-[12px] rounded-full bg-[#565656]" />
          <Ico w={15} h={10} className="mt-[52px]"><path d="M1 1L7.500 9L14 1" /></Ico>
        </div>
      </div>
      <div className="ml-[18px] flex h-[24px] w-[1860px] items-center rounded-full bg-[#2a2a2a] text-[#bbb]">
        <Ico w={9} h={16} className="ml-[8px]"><path d="M8 1L1 8L8 15" /></Ico>
        <div className="ml-[77px] h-[12px] w-[1635px] rounded-full bg-[#545454]" />
        <Ico w={9} h={16} className="ml-[114px]"><path d="M1 1L8 8L1 15" /></Ico>
      </div>
      <Controls />
      <Taskbar />
      <ExpandPanel />
      <svg width="18" height="18" viewBox="0 0 18 18" className="absolute left-[371px] top-[554px]">
        <path d="M6 1H12V6H17V12H12V17H6V12H1V6H6Z" fill="#fff" stroke="#111" strokeWidth="1.600" />
      </svg>
    </div>
  );
}
